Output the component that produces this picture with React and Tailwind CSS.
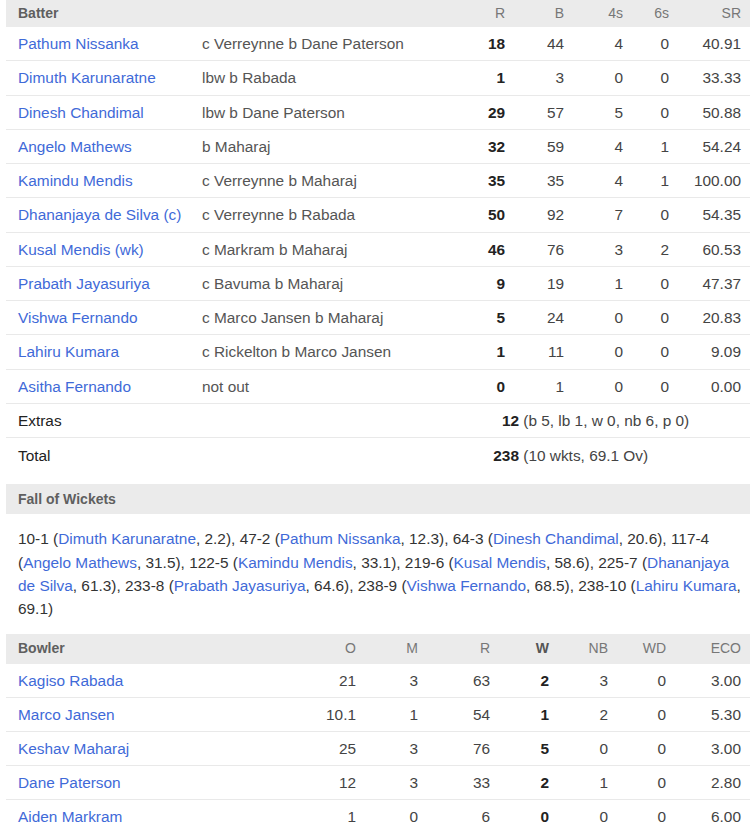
import React from "react";

const batters = [
  ["Pathum Nissanka", "c Verreynne b Dane Paterson", "18", "44", "4", "0", "40.91"],
  ["Dimuth Karunaratne", "lbw b Rabada", "1", "3", "0", "0", "33.33"],
  ["Dinesh Chandimal", "lbw b Dane Paterson", "29", "57", "5", "0", "50.88"],
  ["Angelo Mathews", "b Maharaj", "32", "59", "4", "1", "54.24"],
  ["Kamindu Mendis", "c Verreynne b Maharaj", "35", "35", "4", "1", "100.00"],
  ["Dhananjaya de Silva (c)", "c Verreynne b Rabada", "50", "92", "7", "0", "54.35"],
  ["Kusal Mendis (wk)", "c Markram b Maharaj", "46", "76", "3", "2", "60.53"],
  ["Prabath Jayasuriya", "c Bavuma b Maharaj", "9", "19", "1", "0", "47.37"],
  ["Vishwa Fernando", "c Marco Jansen b Maharaj", "5", "24", "0", "0", "20.83"],
  ["Lahiru Kumara", "c Rickelton b Marco Jansen", "1", "11", "0", "0", "9.09"],
  ["Asitha Fernando", "not out", "0", "1", "0", "0", "0.00"],
];

const bowlers = [
  ["Kagiso Rabada", "21", "3", "63", "2", "3", "0", "3.00"],
  ["Marco Jansen", "10.1", "1", "54", "1", "2", "0", "5.30"],
  ["Keshav Maharaj", "25", "3", "76", "5", "0", "0", "3.00"],
  ["Dane Paterson", "12", "3", "33", "2", "1", "0", "2.80"],
  ["Aiden Markram", "1", "0", "6", "0", "0", "0", "6.00"],
];

const wickets = [
  ["10-1", "Dimuth Karunaratne", "2.2"],
  ["47-2", "Pathum Nissanka", "12.3"],
  ["64-3", "Dinesh Chandimal", "20.6"],
  ["117-4", "Angelo Mathews", "31.5"],
  ["122-5", "Kamindu Mendis", "33.1"],
  ["219-6", "Kusal Mendis", "58.6"],
  ["225-7", "Dhananjaya de Silva", "61.3"],
  ["233-8", "Prabath Jayasuriya", "64.6"],
  ["238-9", "Vishwa Fernando", "68.5"],
  ["238-10", "Lahiru Kumara", "69.1"],
];

// column edges measured from the screenshot (first col already minus the 12px padding)
const batGrid = "grid grid-cols-[184px_263px_40px_59px_59px_46px_72px] items-center pl-3 pr-[9px]";
const bowlGrid = "grid grid-cols-[298px_40px_62px_72px_59px_59px_58px_75px] items-center pl-3 pr-[9px]";
const link = "text-[#3f6ad8]";

export default function App() {
  return (
    <div
      className="w-[750px] pl-[6px] bg-white text-[15.4px] text-[#333]"
      style={{ fontFamily: '"Liberation Sans", Arial, sans-serif' }}
    >
      {/* Batting */}
      <div className={`${batGrid} h-[27px] bg-[#ebebeb] text-[14px] text-[#777]`}>
        <div className="font-bold text-[#5f5f5f]">Batter</div>
        <div />
        <div className="text-right">R</div>
        <div className="text-right">B</div>
        <div className="text-right">4s</div>
        <div className="text-right">6s</div>
        <div className="text-right">SR</div>
      </div>
      {batters.map((b) => (
        <div key={b[0]} className={`${batGrid} h-[34.25px] border-b border-[#e9e9e9]`}>
          <div className={link}>{b[0]}</div>
          <div className="text-[#555]">{b[1]}</div>
          <div className="text-right font-bold text-[#222]">{b[2]}</div>
          <div className="text-right text-[#444]">{b[3]}</div>
          <div className="text-right text-[#444]">{b[4]}</div>
          <div className="text-right text-[#444]">{b[5]}</div>
          <div className="text-right text-[#444]">{b[6]}</div>
        </div>
      ))}
      <div className="grid grid-cols-[184px_auto] items-center pl-3 h-[34.25px] border-b border-[#e9e9e9] text-[#222]">
        <div>Extras</div>
        <div className="pl-[263px]">
          <span className="inline-block w-[54px] text-right font-bold">12</span>{" "}
          <span className="text-[#444]">(b 5, lb 1, w 0, nb 6, p 0)</span>
        </div>
      </div>
      <div className="grid grid-cols-[184px_auto] items-center pl-3 h-[34.25px] text-[#222]">
        <div>Total</div>
        <div className="pl-[263px]">
          <span className="inline-block w-[54px] text-right font-bold">238</span>{" "}
          <span className="text-[#444]">(10 wkts, 69.1 Ov)</span>
        </div>
      </div>

      {/* Fall of wickets */}
      <div className="mt-[12px] h-[30px] flex items-center pl-3 bg-[#ebebeb] text-[14px] font-bold text-[#5f5f5f]">
        Fall of Wickets
      </div>
      <p className="pl-3 pt-[13px] pb-[13px] leading-[23.4px] text-[#333]">
        {wickets.map((w, i) => (
          <React.Fragment key={w[0]}>
            {w[0]} (<span className={link}>{w[1]}</span>, {w[2]}){i < wickets.length - 1 ? ", " : ""}
          </React.Fragment>
        ))}
      </p>

      {/* Bowling */}
      <div className={`${bowlGrid} h-[30px] bg-[#ebebeb] text-[14px] text-[#777]`}>
        <div className="font-bold text-[#5f5f5f]">Bowler</div>
        <div className="text-right">O</div>
        <div className="text-right">M</div>
        <div className="text-right">R</div>
        <div className="text-right font-bold text-[#555]">W</div>
        <div className="text-right">NB</div>
        <div className="text-right">WD</div>
        <div className="text-right">ECO</div>
      </div>
      {bowlers.map((b, i) => (
        <div
          key={b[0]}
          className={`${bowlGrid} h-[34px] ${i < bowlers.length - 1 ? "border-b border-[#e9e9e9]" : ""}`}
        >
          <div className={link}>{b[0]}</div>
          <div className="text-right text-[#444]">{b[1]}</div>
          <div className="text-right text-[#444]">{b[2]}</div>
          <div className="text-right text-[#444]">{b[3]}</div>
          <div className="text-right font-bold text-[#222]">{b[4]}</div>
          <div className="text-right text-[#444]">{b[5]}</div>
          <div className="text-right text-[#444]">{b[6]}</div>
          <div className="text-right text-[#444]">{b[7]}</div>
        </div>
      ))}
    </div>
  );
}
